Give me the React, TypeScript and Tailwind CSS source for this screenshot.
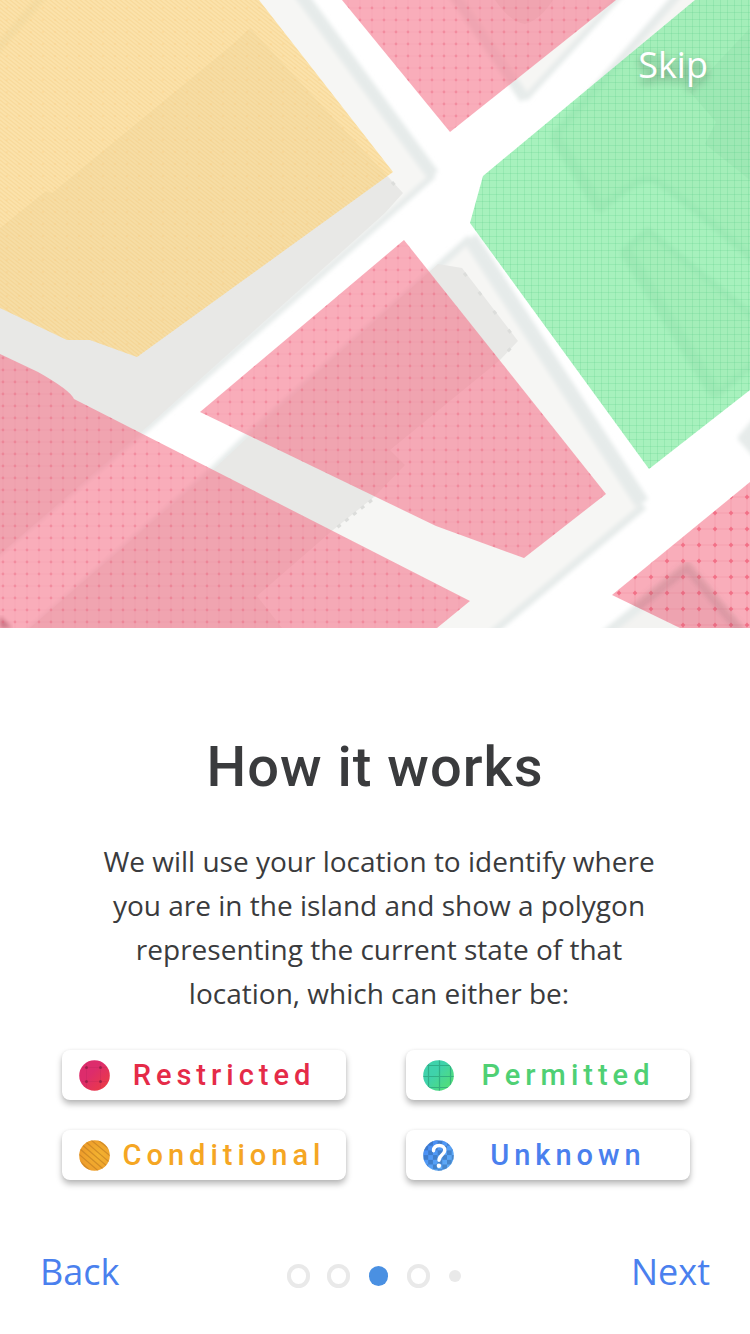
import React from "react";

const sans = "font-['Open_Sans','Noto_Sans',sans-serif]";
const roboto = "font-[Roboto,'Noto_Sans',sans-serif]";

function ZoneMap() {
  return (
    <svg
      viewBox="0 0 750 628"
      className="block h-auto w-full"
      role="img"
      aria-label="Map with restricted, conditional and permitted zones"
    >
      <defs>
        <filter id="soft" x="-5%" y="-5%" width="110%" height="110%">
          <feGaussianBlur stdDeviation="2" />
        </filter>
        <pattern id="dotsTop" width="12" height="12" x="6" y="2" patternUnits="userSpaceOnUse">
          <path d="M0 6h12M6 0v12" stroke="#e8526c" strokeOpacity=".05" />
          <circle cx="6" cy="6" r="1.4" fill="#e8526c" fillOpacity=".32" />
        </pattern>
        <pattern id="dotsMid" width="12" height="12" x="8" y="0" patternUnits="userSpaceOnUse">
          <path d="M0 6h12M6 0v12" stroke="#e8526c" strokeOpacity=".05" />
          <circle cx="6" cy="6" r="1.4" fill="#e8526c" fillOpacity=".32" />
        </pattern>
        <pattern id="dotsLow" width="12" height="12" x="9" y="4" patternUnits="userSpaceOnUse">
          <path d="M0 6h12M6 0v12" stroke="#e8526c" strokeOpacity=".05" />
          <circle cx="6" cy="6" r="1.4" fill="#e8526c" fillOpacity=".32" />
        </pattern>
        <pattern id="dotsWide" width="16" height="16" x="3" y="9" patternUnits="userSpaceOnUse">
          <path d="M0 8h16M8 0v16" stroke="#e8526c" strokeOpacity=".16" />
          <path d="M8 5.6l2.4 2.4L8 10.4 5.6 8z" fill="#ee4866" fillOpacity=".55" />
        </pattern>
        <pattern id="stripes" width="5" height="4" patternUnits="userSpaceOnUse">
          <path d="M-5 -4L10 8M-5 0L5 8M0 -4L10 4" stroke="#f3c371" strokeOpacity=".3" strokeWidth="1.2" />
        </pattern>
        <pattern id="sparse" width="12" height="12" x="1" y="2" patternUnits="userSpaceOnUse">
          <circle cx="6" cy="6" r="1.2" fill="#f7b96c" fillOpacity=".16" />
        </pattern>
        <pattern id="mesh" width="7" height="7" x="3" y="2" patternUnits="userSpaceOnUse">
          <path d="M0 3.5h7M3.5 0v7" stroke="#4fca80" strokeOpacity=".2" />
        </pattern>
        <clipPath id="lowRight">
          <path d="M750 482L612 595L680 628H750Z" />
        </clipPath>
      </defs>

      <rect width="750" height="628" fill="#fff" />

      <g filter="url(#soft)" stroke="#e6ebea" strokeLinejoin="round">
        <path d="M-20-20H292L433 175L147 426L-20 566Z" fill="#f6f6f4" stroke="none" />
        <path d="M290-20L433 175" strokeWidth="13" />
        <path d="M434 175L147 428L-20 568" fill="none" strokeWidth="6" />
        <path d="M471 239L642 505L483 640H20L213 470L248 436Z" fill="#f6f6f4" stroke="none" />
        <path d="M470 238L642 503" strokeWidth="15" />
        <path d="M644 506L486 638M20 640L213 470L248 436L470 238" fill="none" strokeWidth="7" />
        <path d="M444-20L525 99L625-10V-20Z" fill="#f6f6f4" stroke="none" />
        <path d="M444-20L525 99" strokeWidth="11" />
        <path d="M525 99L625-10" strokeWidth="6" />
        <path d="M682-10L555 135L600 209Q638 177 650 179Q664 180 770 274V-20Z" fill="#f6f6f4" strokeWidth="8" />
        <path d="M555 137L600 208" strokeWidth="12" />
        <path d="M625 250L648 231L770 330V350L716 395Z" fill="#f6f6f4" strokeWidth="7" />
        <path d="M625 250L716 395" strokeWidth="13" />
        <path d="M770 405L742 438L770 470Z" fill="#e6ebea" strokeWidth="8" />
        <path d="M590 646L687 569L770 668Z" fill="#f3f3f1" strokeWidth="9" />
        <path d="M-10 58L46-8" fill="none" strokeWidth="9" />
      </g>
      <g fill="#e8e8e6">
        <path d="M0 228L46 191L52 193L233 44L250 28L403 193L385 213L147 427L0 554Z" />
        <path d="M438 264L462 268L518 341L500 360L390 450L405 465L374 497L333 530L257 596L282 628H30L213 470L248 437Z" />
        <path d="M495 0Q510 22 525 24Q540 20 553 0Z" />
        <path d="M750 28L690 92L716 122L705 144L750 180Z" />
      </g>
      <g fill="none" stroke="#dcdddb" strokeWidth="3" strokeDasharray="4 20">
        <path d="M464 273L517 341L500 360" />
        <path d="M372 500L334 530" strokeDasharray="4 6" />
        <path d="M392 182L403 195" />
      </g>
      <path d="M0 616L12 628H0Z" fill="#8d7a80" filter="url(#soft)" />

      <path d="M0 0H259L393 172L137 357L90 340H67L0 308Z" fill="#ffd679" fillOpacity=".6" />
      <path d="M0 0H259L393 172L137 357L90 340H67L0 308Z" fill="url(#stripes)" />
      <path d="M0 0H259L393 172L137 357L90 340H67L0 308Z" fill="url(#sparse)" />

      <g fill="#f5768c" fillOpacity=".6">
        <path d="M342 0L450 132L616 0Z" />
        <path d="M404 240L606 494L524 558L436 526L200 412Z" />
        <path d="M0 354L38 372Q70 390 74 399L470 601L437 628H0Z" />
        <path d="M750 482L612 595L680 628H750Z" />
      </g>
      <path d="M342 0L450 132L616 0Z" fill="url(#dotsTop)" />
      <path d="M404 240L606 494L524 558L436 526L200 412Z" fill="url(#dotsMid)" />
      <path d="M0 354L38 372Q70 390 74 399L470 601L437 628H0Z" fill="url(#dotsLow)" />
      <path d="M750 482L612 595L680 628H750Z" fill="url(#dotsWide)" />
      <g clipPath="url(#lowRight)">
        <path d="M622 618L687 566L744 634" fill="#8a5560" fillOpacity=".05" stroke="#80606a" strokeOpacity=".14" strokeWidth="10" filter="url(#soft)" />
      </g>

      <path d="M695 0L483 176L470 223L649 469L750 390V0Z" fill="#71e894" fillOpacity=".62" />
      <path d="M695 0L483 176L470 223L649 469L750 390V0Z" fill="url(#mesh)" />
    </svg>
  );
}

function RestrictedIcon() {
  return (
    <svg viewBox="0 0 31 31" className="size-[31px] shrink-0" aria-hidden="true">
      <defs>
        <linearGradient id="red" x1=".4" y1=".4" x2="1" y2="1">
          <stop offset="0" stopColor="#dd2c6c" />
          <stop offset="1" stopColor="#ee3e3e" />
        </linearGradient>
      </defs>
      <circle cx="15.5" cy="15.5" r="15.3" fill="url(#red)" />
      <path d="M7.500 3v25M21.500 3v25M3 7.500h25M3 21.500h25" stroke="#8c1c48" strokeOpacity=".12" />
      <g fill="#8c1c40" fillOpacity=".7">
        <circle cx="7.5" cy="7.5" r="1.5" />
        <circle cx="21.5" cy="7.5" r="1.5" />
        <circle cx="7.5" cy="21.5" r="1.5" />
        <circle cx="21.5" cy="21.5" r="1.5" />
      </g>
    </svg>
  );
}

function PermittedIcon() {
  return (
    <svg viewBox="0 0 31 31" className="size-[31px] shrink-0" aria-hidden="true">
      <defs>
        <linearGradient id="green" x1=".4" y1=".4" x2=".95" y2=".9">
          <stop offset="0" stopColor="#3fd2ab" />
          <stop offset="1" stopColor="#55e070" />
        </linearGradient>
        <clipPath id="disc">
          <circle cx="15.5" cy="15.5" r="15.3" />
        </clipPath>
      </defs>
      <g clipPath="url(#disc)">
        <rect width="31" height="31" fill="url(#green)" />
        <path d="M5.500 0v31M16.500 0v31M27.500 0v31M0 5.500h31M0 16.500h31M0 27.500h31" stroke="#279c78" strokeOpacity=".65" strokeWidth="1.2" />
      </g>
    </svg>
  );
}

function ConditionalIcon() {
  return (
    <svg viewBox="0 0 31 31" className="size-[31px] shrink-0" aria-hidden="true">
      <defs>
        <radialGradient id="amber" cx=".65" cy=".5" r=".6">
          <stop offset="0" stopColor="#f3b330" />
          <stop offset="1" stopColor="#ee9d2b" />
        </radialGradient>
      </defs>
      <g clipPath="url(#disc)">
        <rect width="31" height="31" fill="url(#amber)" />
        <path
          d="M-6 15L18 37M-6 9L24 35M-6 3L30 34M-6-3L36 33M0-4L36 27M6-5L36 20M12-6L36 14M18-6L36 8"
          stroke="#b67420"
          strokeOpacity=".55"
          strokeWidth="1.2"
        />
      </g>
    </svg>
  );
}

function UnknownIcon() {
  return (
    <svg viewBox="0 0 31 31" className="size-[31px] shrink-0" aria-hidden="true">
      <defs>
        <linearGradient id="blue" x1="0" y1="0" x2="1" y2="1">
          <stop offset="0" stopColor="#4285f4" />
          <stop offset="1" stopColor="#65b5f8" />
        </linearGradient>
        <pattern id="checks" width="9.4" height="9.4" x=".5" y="1" patternUnits="userSpaceOnUse">
          <path d="M4.700 0h4.700v4.700H4.700zM0 4.700h4.700v4.700H0z" fill="#2e5f9c" fillOpacity=".48" />
        </pattern>
      </defs>
      <g clipPath="url(#disc)">
        <rect width="31" height="31" fill="url(#blue)" />
        <rect width="31" height="31" fill="url(#checks)" />
      </g>
      <path
        d="M10.500 10.700C10.700 7.200 13 5.500 16.200 5.500C19.500 5.500 21.800 7.400 21.800 10.200C21.800 14.600 16 15 16 20.200"
        fill="none"
        stroke="#fff"
        strokeWidth="3.4"
        strokeLinecap="round"
      />
      <circle cx="15.900" cy="25.800" r="2.200" fill="#fff" />
    </svg>
  );
}

const states = [
  { label: "Restricted", color: "text-[#e52b48]", Icon: RestrictedIcon },
  { label: "Permitted", color: "text-[#4fd074]", Icon: PermittedIcon },
  { label: "Conditional", color: "text-[#f5a623]", Icon: ConditionalIcon },
  { label: "Unknown", color: "text-[#4a80ee]", Icon: UnknownIcon },
];

const ring = "h-6 w-[23px] rounded-full border-4 border-[#e9e9e9]";

const steps = [
  { name: "Step 1", look: ring },
  { name: "Step 2", look: ring },
  { name: "Step 3", look: "mx-[2px] h-5 w-[19px] rounded-full bg-[#4a90e2]" },
  { name: "Step 4", look: ring },
  { name: "Step 5", look: "mx-[2px] size-3 rounded-full bg-[#e9e9e9]" },
];

export default function App() {
  return (
    <main className={`flex min-h-screen flex-col bg-white text-[#3a3b3d] ${sans}`}>
      <header className="relative">
        <ZoneMap />
        <button
          type="button"
          className="absolute top-10 right-[42px] text-[36px] leading-[50px] text-white [text-shadow:0_4px_8px_rgba(0,0,0,0.4)]"
        >
          Skip
        </button>
      </header>

      <section className="flex flex-col items-center pt-[106px]">
        <h1 className={`text-[56px] leading-[66px] font-medium tracking-[1px] ${roboto}`}>How it works</h1>
        <p className="mt-[39px] ml-2 max-w-[600px] text-center text-[28px] leading-[44px]">
          We will use your location to identify where you are in the island and show a polygon representing the
          current state of that location, which can either be:
        </p>
      </section>

      <ul className="mt-[35px] grid grid-cols-2 gap-x-15 gap-y-[30px] pr-15 pl-[62px]">
        {states.map(({ label, color, Icon }) => (
          <li
            key={label}
            className="flex h-[50px] items-center rounded-lg bg-white pr-2 pl-[17px] shadow-[0_4px_6px_rgba(0,0,0,0.28),0_0_3px_rgba(0,0,0,0.06)]"
          >
            <Icon />
            <span className={`flex-1 text-center text-[29px] leading-[52px] font-medium tracking-[5px] ${color} ${roboto}`}>
              {label}
            </span>
          </li>
        ))}
      </ul>

      <footer className="mt-auto grid grid-cols-[1fr_auto_1fr] items-center px-10 pb-[37px] text-[36px] leading-[50px] text-[#4a80ee]">
        <button type="button" className="justify-self-start">
          Back
        </button>
        <nav aria-label="Steps" className="flex items-center gap-[17px] pt-2">
          {steps.map(({ name, look }) => (
            <button key={name} type="button" aria-label={name} className={look} />
          ))}
        </nav>
        <button type="button" className="justify-self-end">
          Next
        </button>
      </footer>
    </main>
  );
}
